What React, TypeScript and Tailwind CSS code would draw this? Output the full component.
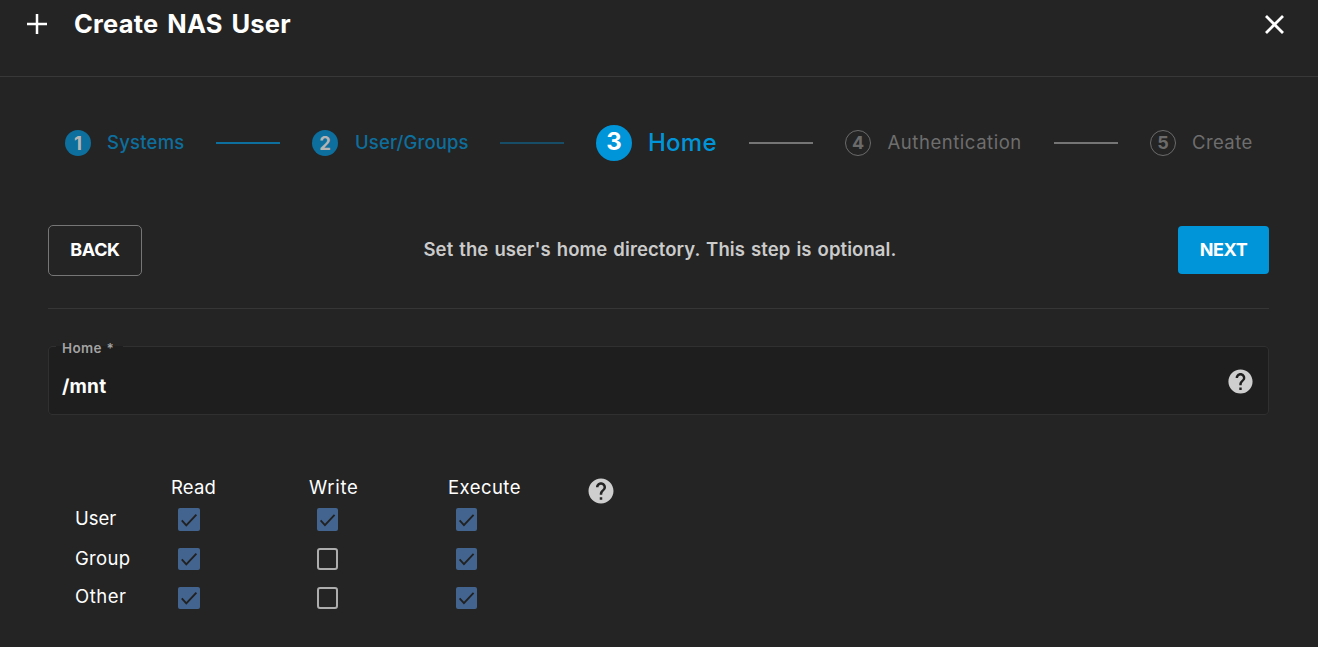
import React from "react";
import { MdHelp } from "react-icons/md";

type Step = {
  label: string;
  state: "done" | "active" | "todo";
  labelClass: string;
  lineClass?: string;
};

const steps: Step[] = [
  { label: "Systems", state: "done", labelClass: "w-[77px] tracking-[0.22px]", lineClass: "bg-[#0d6f9d]" },
  { label: "User/Groups", state: "done", labelClass: "w-[114px] pl-px tracking-[0.12px]", lineClass: "bg-[#174d66]" },
  { label: "Home", state: "active", labelClass: "w-[69px] tracking-[0.25px]", lineClass: "bg-[#757575]" },
  { label: "Authentication", state: "todo", labelClass: "w-[135px] pl-[0.5px] tracking-[0.55px]", lineClass: "bg-[#757575]" },
  { label: "Create", state: "todo", labelClass: "w-[60px] tracking-[0.4px]" },
];

const circleStyles = {
  done: "h-[26px] w-[26px] bg-[#0d6f9d] text-[18.5px] text-[#b4b4b4]",
  active: "h-9 w-9 bg-[#0095d9] text-[24px] text-white pb-[2px]",
  todo: "h-[26px] w-[26px] border border-[#6b6b6b] text-[18px] text-[#6b6b6b]",
};

const labelStyles = {
  done: "pb-[2px] text-[18.5px] font-medium text-[#0d6f9d]",
  active: "text-[24px] font-medium text-[#0095d9]",
  todo: "pb-[2px] text-[18.5px] text-[#6e6e6e]",
};

function Stepper() {
  return (
    <nav className="flex h-9 items-center gap-8 pl-[65px]">
      {steps.map((step, i) => (
        <React.Fragment key={step.label}>
          <div className="flex shrink-0 items-center gap-4">
            <span
              className={`flex shrink-0 items-center justify-center rounded-full font-bold leading-none ${circleStyles[step.state]}`}
            >
              {i + 1}
            </span>
            <span className={`whitespace-nowrap leading-none ${labelStyles[step.state]} ${step.labelClass}`}>
              {step.label}
            </span>
          </div>
          {step.lineClass && <span className={`h-0.5 w-16 shrink-0 ${step.lineClass}`} />}
        </React.Fragment>
      ))}
    </nav>
  );
}

function Checkbox({ checked, sizeClass }: { checked: boolean; sizeClass: string }) {
  return checked ? (
    <span className={`flex items-center justify-center rounded-[2px] bg-[#43648e] ${sizeClass}`}>
      <svg viewBox="0 0 22 22" className="h-[22px] w-[22px]" fill="none" stroke="#212121" strokeWidth="1.9">
        <path d="M3.8 11.4 L8.3 16.3 L18.4 5.6" />
      </svg>
    </span>
  ) : (
    <span className={`rounded-[3px] border-2 border-[#adadad] ${sizeClass}`} />
  );
}

const boxWidths = ["w-[22px]", "w-[21px]", "w-[21px]"];

const permissions = [
  { who: "User", bits: [true, true, true], rowClass: "h-10", boxClass: "h-[23px]", labelClass: "-mt-[2px] tracking-[-0.05px]" },
  { who: "Group", bits: [true, false, true], rowClass: "h-[39px]", boxClass: "h-[22px]", labelClass: "-mt-[2px] tracking-[0.3px]" },
  { who: "Other", bits: [true, false, true], rowClass: "h-[39px]", boxClass: "h-[22px]", labelClass: "-mt-[3px] tracking-[0.5px]" },
];

export default function App() {
  return (
    <div className="h-[647px] w-[1318px] overflow-hidden bg-[#242424] font-['Inter',sans-serif] text-white">
      <header className="flex h-[77px] items-start border-b border-[#383838] pl-[27px] pr-[34px]">
        <svg viewBox="0 0 20 20" className="mt-[14px] h-5 w-5 shrink-0" stroke="#fff" strokeWidth="2.5">
          <path d="M0 10H20M10 0V20" />
        </svg>
        <h1 className="ml-[27px] mt-[6px] flex-1 text-[25.5px] font-bold leading-9 tracking-[0.22px] [word-spacing:2.5px]">
          Create NAS User
        </h1>
        <svg viewBox="0 0 19 19" className="mt-[14.5px] h-[19px] w-[19px] shrink-0" stroke="#fff" strokeWidth="2.8">
          <path d="M1 1L18 18M18 1L1 18" />
        </svg>
      </header>

      <div className="mt-12">
        <Stepper />
      </div>

      <main className="ml-12 mr-[49px]">
        <div className="mt-16 flex h-[84px] items-start justify-between border-b border-[#363636]">
          <button className="h-[51px] w-[94px] rounded-[5px] border border-[#767676] pb-[2px] text-[18px] font-bold tracking-[-0.4px]">
            BACK
          </button>
          <p className="w-[473px] whitespace-nowrap text-[18.5px] font-semibold leading-[49px] tracking-[0.08px] text-[#cbcbcb] [word-spacing:1.3px]">
            Set the user's home directory. This step is optional.
          </p>
          <button className="mt-px h-12 w-[91px] rounded bg-[#0095d9] pb-px text-[18px] font-bold tracking-[-0.4px]">
            NEXT
          </button>
        </div>

        <fieldset className="mt-[27px] h-[79px] rounded border border-[#303030] bg-[#1e1e1e] pl-[13px] pr-[14px]">
          <legend className="-ml-[6px] h-5 w-[67px] whitespace-nowrap pl-[6px] pt-[4px] text-[13.5px] font-semibold leading-4 tracking-[0.35px] text-[#a3a3a3] [word-spacing:1px]">
            Home *
          </legend>
          <div className="flex h-[50px] items-start justify-between">
            <span className="mt-[19px] text-[19px] font-bold leading-6 tracking-[0.2px]">/mnt</span>
            <MdHelp className="mr-[-0.5px] mt-[11px] h-[29px] w-[29px] text-[#cecece]" />
          </div>
        </fieldset>
      </main>

      <section className="mt-[61px] flex pl-[75px] text-[18.5px]">
        <div>
          <div className="grid h-6 grid-cols-[96px_138px_139px_138px] items-center leading-[22px]">
            <span />
            <span className="pb-[2px] tracking-[0.15px]">Read</span>
            <span className="pb-[2px] tracking-[0.7px]">Write</span>
            <span className="pb-[2px] tracking-[0.45px]">Execute</span>
          </div>
          <div className="mt-2">
            {permissions.map((row) => (
              <div
                key={row.who}
                className={`grid grid-cols-[103px_139px_139px_130px] items-start ${row.rowClass}`}
              >
                <span className={`leading-6 ${row.labelClass}`}>{row.who}</span>
                {row.bits.map((on, i) => (
                  <Checkbox key={i} checked={on} sizeClass={`${row.boxClass} ${boxWidths[i]}`} />
                ))}
              </div>
            ))}
          </div>
        </div>
        <MdHelp className="ml-[-0.5px] mt-[0.3px] h-[30px] w-[30px] text-[#cecece]" />
      </section>
    </div>
  );
}
